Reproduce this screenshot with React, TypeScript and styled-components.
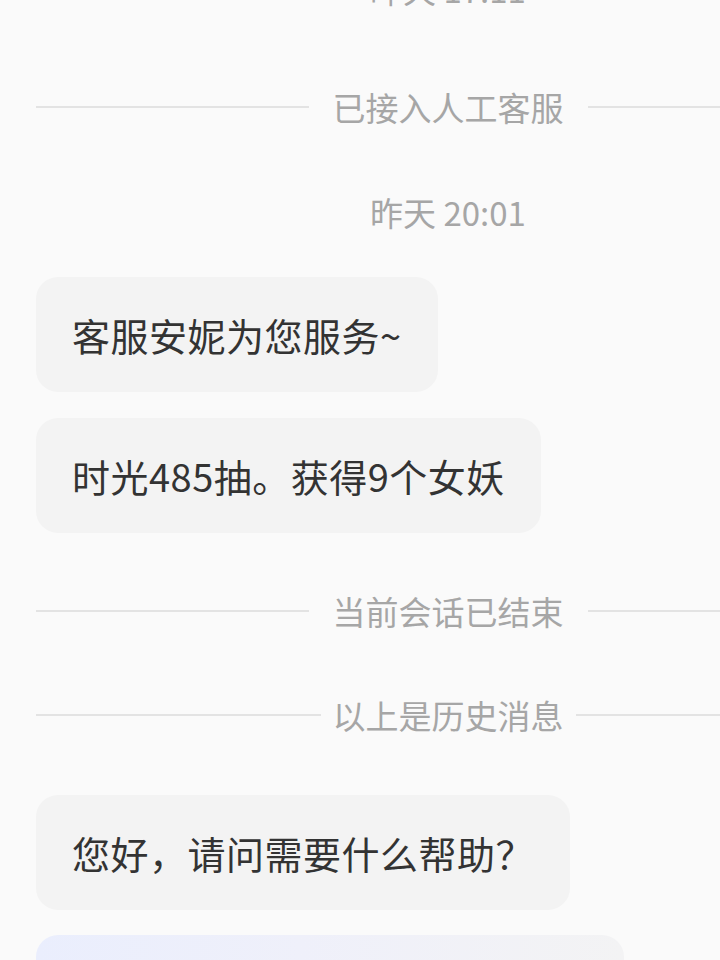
import React from "react";
import styled, { createGlobalStyle } from "styled-components";

const GlobalStyle = createGlobalStyle`
	html, body {
		margin: 0;
		padding: 0;
		background: #fafafa;
		overflow: hidden;
	}
	body {
		font-family: "Noto Sans CJK SC", "Noto Sans", sans-serif;
	}
`;

const Screen = styled.div`
	width: 720px;
	height: 960px;
	overflow: hidden;
	background: #fafafa;
`;

// the chat list is wider than the screen, the right side is cut off
const ChatList = styled.div`
	width: 896px;
	box-sizing: border-box;
	padding: 0 36px;
	display: flex;
	flex-direction: column;
	align-items: flex-start;
`;

const TimeStamp = styled.div<{ $top: number }>`
	align-self: stretch;
	margin-top: ${(p) => p.$top}px;
	text-align: center;
	font-size: 33px;
	line-height: 40px;
	color: #a6a6a6;
`;

const Divider = styled.div<{ $top: number; $gap: number }>`
	align-self: stretch;
	margin-top: ${(p) => p.$top}px;
	display: flex;
	align-items: center;
	gap: ${(p) => p.$gap}px;
	font-size: 33px;
	line-height: 40px;
	color: #a6a6a6;

	&::before,
	&::after {
		content: "";
		flex: 1;
		height: 2px;
		background: #e3e3e3;
	}
`;

const Bubble = styled.div<{ $top: number }>`
	margin-top: ${(p) => p.$top}px;
	padding: 31px 36px;
	border-radius: 22px;
	background: #f3f3f3;
	color: #333;
	font-size: 38px;
	line-height: 53px;
	letter-spacing: 0.5px;
	white-space: nowrap;
`;

const CardBubble = styled.div`
	margin-top: 25px;
	width: 588px;
	height: 200px;
	border-radius: 22px;
	background: linear-gradient(90deg, #eaeefd 0%, #eff0fa 45%, #f3f3f4 100%);
`;

function App() {
	return (
		<Screen>
			<GlobalStyle />
			<ChatList>
				<TimeStamp $top={-31}>昨天 17:11</TimeStamp>
				<Divider $top={78} $gap={24}>已接入人工客服</Divider>
				<TimeStamp $top={65}>昨天 20:01</TimeStamp>
				<Bubble $top={45}>客服安妮为您服务~</Bubble>
				<Bubble $top={26}>时光485抽。获得9个女妖</Bubble>
				<Divider $top={58} $gap={24}>当前会话已结束</Divider>
				<Divider $top={64} $gap={12}>以上是历史消息</Divider>
				<Bubble $top={60}>您好，请问需要什么帮助？</Bubble>
				<CardBubble />
			</ChatList>
		</Screen>
	);
}

export default App;
